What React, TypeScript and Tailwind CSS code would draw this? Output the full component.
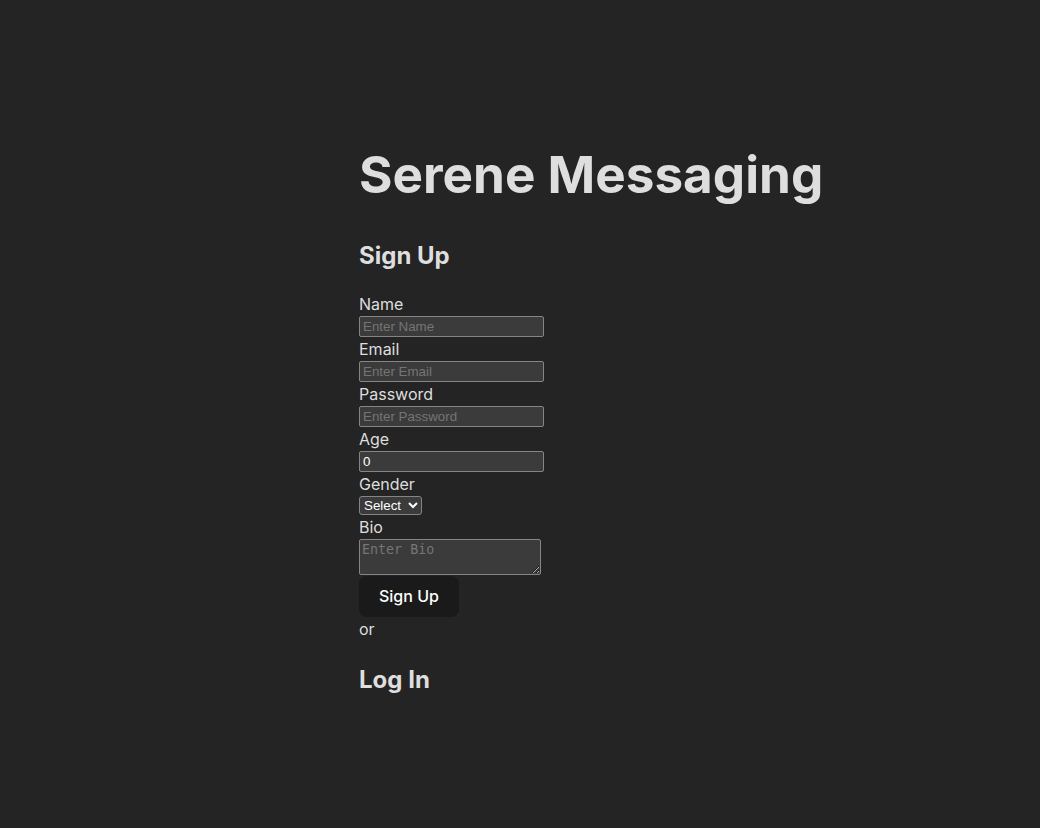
import { useState } from "react";

const fields = [
  { label: "Name", type: "text", placeholder: "Enter Name" },
  { label: "Email", type: "email", placeholder: "Enter Email" },
  { label: "Password", type: "password", placeholder: "Enter Password" },
];

const control =
  "block w-[185px] h-[21px] px-[3px] bg-[#3b3b3b] border border-[#858585] rounded-[2px] text-[13.33px] leading-none text-white placeholder:text-[#757575] font-['Liberation_Sans',Arial,sans-serif] outline-none";

export default function App() {
  const [age, setAge] = useState("0");

  return (
    <div className="min-h-screen bg-[#242424] text-[#dedede] font-['Inter',sans-serif] text-base leading-6 [color-scheme:dark] flex items-center">
      <div className="pl-[359px] py-[112px]">
        {/* TITLE */}
        <h1 className="text-[51.2px] leading-[1.1] font-bold pt-[34px] pb-[34px]">Serene Messaging</h1>

        {/* SIGN UP */}
        <h2 className="text-2xl leading-9 font-bold pt-[2px] pb-[18px]">Sign Up</h2>
        <form className="flex flex-col items-start" onSubmit={(e) => e.preventDefault()}>
          {fields.map((f) => (
            <label key={f.label} className="block">
              <span className="block">{f.label}</span>
              <input type={f.type} placeholder={f.placeholder} className={control} />
            </label>
          ))}

          <label className="block">
            <span className="block">Age</span>
            <input
              type="text"
              value={age}
              onChange={(e) => setAge(e.target.value)}
              className={control}
            />
          </label>

          <label className="block">
            <span className="block">Gender</span>
            <select className="block h-[19px] w-[63px] bg-[#3b3b3b] border border-[#858585] rounded-[3px] text-[13.33px] leading-none text-white font-['Liberation_Sans',Arial,sans-serif]">
              <option>Select</option>
              <option>Male</option>
              <option>Female</option>
              <option>Other</option>
            </select>
          </label>

          <label className="block">
            <span className="block">Bio</span>
            <textarea
              placeholder="Enter Bio"
              className="block w-[182px] h-[36px] px-[2px] pt-[2px] pb-0 bg-[#3b3b3b] border border-[#858585] rounded-[2px] text-[13.33px] leading-[16px] text-white placeholder:text-[#757575] font-['DejaVu_Sans_Mono',monospace] outline-none"
            />
          </label>

          <button
            type="submit"
            className="mt-px h-[41px] px-[19px] pb-[2px] rounded-lg bg-[#1a1a1a] border border-transparent text-base font-medium text-white"
          >
            Sign Up
          </button>
        </form>

        <p>or</p>

        {/* LOG IN */}
        <h2 className="text-2xl leading-9 font-bold pt-[21px] pb-[19px]">Log In</h2>
      </div>
    </div>
  );
}
